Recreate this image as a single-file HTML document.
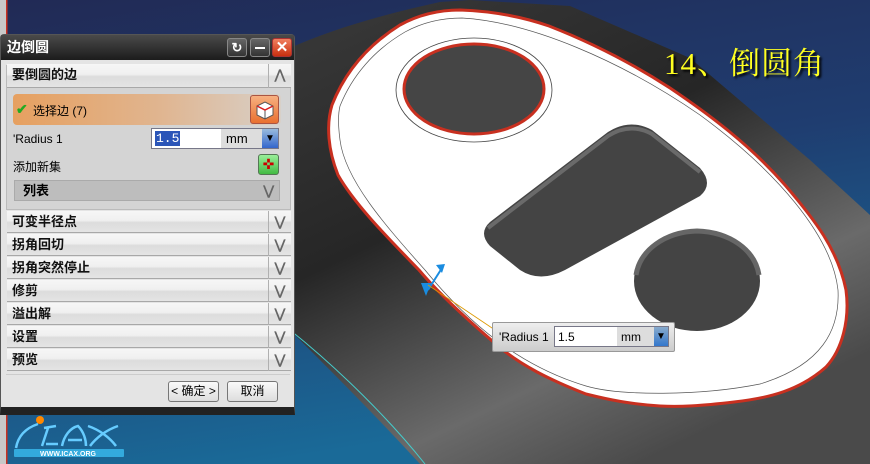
<!DOCTYPE html>
<html><head><meta charset="utf-8">
<style>
*{margin:0;padding:0;box-sizing:border-box}
body{width:870px;height:464px;overflow:hidden;position:relative;font-family:"Liberation Sans","Noto Sans CJK SC",sans-serif;font-size:12px;background:#21295a}
.abs{position:absolute}
.sec{position:absolute;left:6px;width:284px;height:22px;background:linear-gradient(#f6f6f6,#f0f0f0 45%,#dcdcdc 55%,#e4e4e4);border-bottom:1px solid #a8a8a8;font-weight:bold;font-size:13px;line-height:22px;padding-left:5px;color:#111}
.sec .ar{position:absolute;right:0;top:0;width:23px;height:22px;border-left:1px solid #b0b0b0;text-align:center;color:#666;font-size:13px}
.btn{position:absolute;height:21px;border:1px solid #777;border-radius:3px;background:linear-gradient(#fafafa,#ddd);text-align:center;line-height:19px;font-size:12px}
</style></head><body>
<svg class="abs" style="left:0;top:0" width="870" height="464">
<defs>
<linearGradient id="bg" x1="0" y1="0" x2="0.3" y2="1"><stop offset="0" stop-color="#212a55"/><stop offset="0.5" stop-color="#1f3d70"/><stop offset="1" stop-color="#1a6a98"/></linearGradient>
<linearGradient id="body" x1="0" y1="0" x2="0.6" y2="1"><stop offset="0" stop-color="#3a3a3a"/><stop offset="0.45" stop-color="#262626"/><stop offset="0.8" stop-color="#6a6a6a"/><stop offset="1" stop-color="#4a4a4a"/></linearGradient>
</defs>
<rect width="870" height="464" fill="url(#bg)"/>
<path d="M290,48 C330,30 380,15 440,2 L470,0 L570,6 L690,58 L810,160 L870,215 L870,464 L420,464 C380,420 330,370 290,330 Z" fill="url(#body)"/>
<path d="M290,330 C340,370 390,420 425,464" stroke="#4cc" stroke-width="1" fill="none"/>
<path d="M332,105 C345,72 368,45 400,25 C420,14 440,10 460,10 C490,11 520,16 549,26 C590,42 630,62 670,88 C710,115 750,145 785,185 C815,220 838,250 846,290 C850,320 842,350 826,367 C800,390 770,398 734,402 C700,406 680,407 660,406 C630,404 610,400 586,394 C550,380 520,365 497,345 C470,322 440,295 419,270 C390,240 355,205 338,175 C328,150 326,125 332,105 Z" fill="#fff" stroke="#c83020" stroke-width="3"/>
<path d="M340,106 C352,76 374,50 405,32 C425,21 445,18 462,18 C530,22 620,60 700,115 C775,170 832,235 838,290 C840,330 822,365 760,384 C700,396 620,396 586,386 C520,366 470,325 425,270 C385,225 345,180 340,140 C338,125 338,114 340,106 Z" fill="none" stroke="#555" stroke-width="0.7"/>
<ellipse cx="474" cy="90" rx="78" ry="52" fill="none" stroke="#444" stroke-width="0.8"/>
<ellipse cx="474" cy="89" rx="70" ry="45" fill="#454545" stroke="#c83020" stroke-width="3"/>
<path d="M490,222 L608,132 Q630,118 652,130 L700,168 Q714,184 700,196 L565,270 Q540,283 520,270 L490,246 Q478,233 490,222 Z" fill="#444"/>
<path d="M488,228 L608,136 Q630,122 652,134 L700,172" stroke="#6a6a6a" stroke-width="4" fill="none"/>
<ellipse cx="697" cy="281" rx="63" ry="50" fill="#444"/>
<path d="M636,275 C640,250 665,232 697,231 C730,232 755,250 759,275" stroke="#666" stroke-width="5" fill="none"/>
<path d="M428,290 L442,268" stroke="#1a8ce0" stroke-width="2"/>
<polygon points="436,265 445,264 442,273" fill="#1a8ce0"/>
<polygon points="421,283 431,283 426,296" fill="#1a8ce0"/>
<path d="M428,285 L495,330" stroke="#d90" stroke-width="0.8"/>
<rect x="0" y="0" width="6" height="464" fill="#c8c8c8"/>
<rect x="6" y="0" width="1.5" height="464" fill="#c83020"/>
</svg>
<div class="abs" style="left:664px;top:38px;font-family:'Liberation Serif','Noto Serif CJK SC',serif;font-size:31px;color:#ffff20;text-shadow:2px 2px 2px #000;letter-spacing:1px">14、倒圆角</div>
<div class="abs" style="left:492px;top:322px;width:183px;height:30px;background:linear-gradient(#eee,#ccc);border:1px solid #999;border-radius:2px">
<span class="abs" style="left:6px;top:7px;font-size:12px">'Radius 1</span>
<div class="abs" style="left:61px;top:3px;width:115px;height:21px;border:1px solid #778;background:#fff">
<span class="abs" style="left:3px;top:3px">1.5</span>
<div class="abs" style="left:62px;top:0;width:37px;height:19px;background:#ddd;padding:3px 0 0 4px">mm</div>
<div class="abs" style="right:0;top:0;width:14px;height:19px;background:linear-gradient(#8ac,#37c);color:#000;font-size:10px;text-align:center;line-height:19px">▼</div>
</div></div>
<div class="abs" style="left:0;top:34px;width:295px;height:381px;background:#e4e4e4;border:1px solid #555;border-radius:4px 4px 0 0;border-bottom:8px solid #222">
<div class="abs" style="left:0;top:0;width:293px;height:25px;background:linear-gradient(#4a4a4a,#1c1c1c);color:#fff;font-weight:bold;font-size:14px;line-height:25px;padding-left:6px">边倒圆</div>
<div class="abs" style="left:226px;top:3px;width:20px;height:19px;background:linear-gradient(#666,#333);border:1px solid #888;border-radius:3px;color:#fff;text-align:center;font-size:13px;line-height:17px;font-weight:bold">↻</div>
<div class="abs" style="left:249px;top:3px;width:20px;height:19px;background:linear-gradient(#666,#333);border:1px solid #888;border-radius:3px"><div class="abs" style="left:4px;top:8px;width:10px;height:2px;background:#fff"></div></div>
<div class="abs" style="left:271px;top:3px;width:20px;height:19px;background:linear-gradient(#f08060,#c83010);border:1px solid #a33;border-radius:3px;color:#fff;text-align:center;font-size:15px;line-height:17px;font-weight:bold">✕</div>
<div class="abs" style="left:5px;top:30px;width:285px;height:145px;background:#d4d4d4;border:1px solid #bbb"></div>
<div class="sec" style="top:29px;height:24px">要倒圆的边<span class="ar" style="height:24px">⋀</span></div>
<div class="abs" style="left:12px;top:59px;width:268px;height:31px;border-radius:4px;background:linear-gradient(90deg,#e6a060,#e0b590 55%,#d8d0c8)">
<span class="abs" style="left:3px;top:7px;color:#2a2;font-size:14px;font-weight:bold">✔</span>
<span class="abs" style="left:20px;top:8px;font-size:12px">选择边 (7)</span>
<div class="abs" style="left:237px;top:1px;width:29px;height:29px;background:linear-gradient(#f7b080,#e97030);border:1px solid #a54;border-radius:3px">
<svg width="27" height="27"><polygon points="6,10 14,6 22,10 22,19 14,23 6,19" fill="#fff" stroke="#555"/><path d="M6,10 L14,14 L22,10 M14,14 V23" stroke="#555" fill="none"/><path d="M6,10 L14,14 L22,10" stroke="#d22" fill="none" stroke-width="1.5"/></svg></div>
</div>
<span class="abs" style="left:12px;top:97px;font-size:12px">'Radius 1</span>
<div class="abs" style="left:150px;top:93px;width:128px;height:21px;border:1px solid #778;background:#fff">
<span class="abs" style="left:3px;top:2px;background:#2b55b8;color:#fff;font-family:'Liberation Mono',monospace;font-size:13px;padding:0 1px">1.5</span>
<div class="abs" style="left:69px;top:0;width:41px;height:19px;background:#ddd;padding:2px 0 0 5px;font-size:13px">mm</div>
<div class="abs" style="right:0;top:0;width:16px;height:19px;background:linear-gradient(#9bd,#36c);text-align:center;line-height:19px;font-size:10px">▼</div>
</div>
<span class="abs" style="left:12px;top:123px;font-size:12px">添加新集</span>
<div class="abs" style="left:257px;top:119px;width:21px;height:21px;background:linear-gradient(#9e9,#4b4);border:1px solid #575;border-radius:3px;color:#c00;font-size:14px;text-align:center;line-height:19px">✜</div>
<div class="abs" style="left:13px;top:145px;width:266px;height:21px;background:#bdbdbd;border:1px solid #aaa;font-weight:bold;font-size:13px;line-height:19px;padding-left:8px">列表<span class="abs" style="right:5px;top:0;color:#666">⋁</span></div>
<div class="sec" style="top:176px">可变半径点<span class="ar">⋁</span></div>
<div class="sec" style="top:199px">拐角回切<span class="ar">⋁</span></div>
<div class="sec" style="top:222px">拐角突然停止<span class="ar">⋁</span></div>
<div class="sec" style="top:245px">修剪<span class="ar">⋁</span></div>
<div class="sec" style="top:268px">溢出解<span class="ar">⋁</span></div>
<div class="sec" style="top:291px">设置<span class="ar">⋁</span></div>
<div class="sec" style="top:314px">预览<span class="ar">⋁</span></div>
<div class="abs" style="left:5px;top:339px;width:284px;height:1px;background:#ccc"></div>
<div class="btn" style="left:167px;top:346px;width:51px">&lt; 确定 &gt;</div>
<div class="btn" style="left:226px;top:346px;width:51px">取消</div>
</div>
<svg class="abs" style="left:8px;top:412px" width="120" height="50">
<circle cx="32" cy="8" r="4" fill="#f80"/>
<path d="M8,36 C10,24 18,16 30,12" stroke="#6cf" stroke-width="2.5" fill="none"/>
<path d="M34,34 L40,16 M38,32 L50,32 M36,16 L48,14" stroke="#6cf" stroke-width="2.5" fill="none"/>
<path d="M54,34 C56,24 62,16 70,14 C76,20 78,28 78,34 M60,28 L74,28" stroke="#6cf" stroke-width="2.5" fill="none"/>
<path d="M80,14 C92,18 102,26 108,34 M82,34 C88,26 98,18 110,14" stroke="#6cf" stroke-width="2.5" fill="none"/>
<rect x="6" y="37" width="110" height="8" fill="#3ad" rx="1"/>
<text x="60" y="44" font-size="7" font-weight="bold" fill="#fff" text-anchor="middle" font-family="Liberation Sans">WWW.ICAX.ORG</text>
</svg>
</body></html>
